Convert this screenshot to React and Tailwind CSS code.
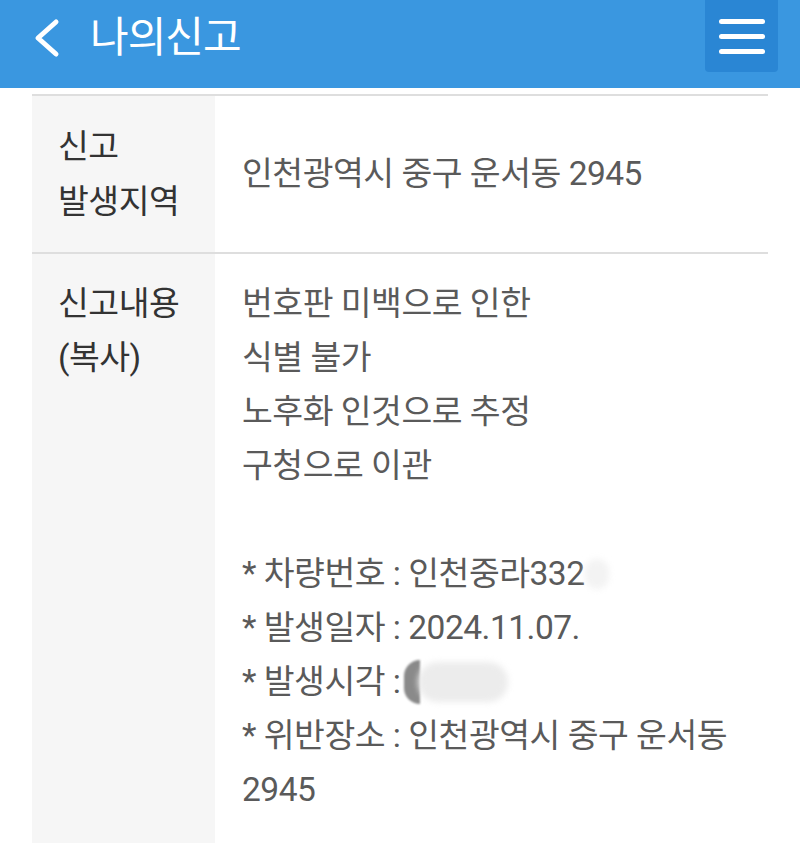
import React from "react";

const font = { fontFamily: '"Roboto", "Noto Sans CJK KR", sans-serif' };

export default function App() {
  return (
    <div className="w-[800px] h-[843px] overflow-hidden bg-white" style={font}>
      <header className="h-[88px] bg-[#3a97e0] flex items-start relative">
        <div className="flex items-center h-[76px] pl-[30px]">
          <svg width="34" height="40" viewBox="0 0 34 40" className="mr-[26px]">
            <path d="M26 4 L8 20 L26 36" fill="none" stroke="white" strokeWidth="5" strokeLinecap="round" strokeLinejoin="round" />
          </svg>
          <span className="text-white text-[42px] leading-none tracking-[-1px]">나의신고</span>
        </div>
        <div className="ml-auto mr-[22px] w-[73px] h-[72px] bg-[#2a86d4] rounded-b-[4px] flex flex-col items-center justify-center gap-[10px]">
          <div className="w-[46px] h-[5px] rounded-full bg-white" />
          <div className="w-[46px] h-[5px] rounded-full bg-white" />
          <div className="w-[46px] h-[5px] rounded-full bg-white" />
        </div>
      </header>
      <div className="mx-[32px] mt-[6px] border-t-2 border-[#dedede]">
        <div className="flex h-[158px] border-b-2 border-[#dedede]">
          <div className="w-[183px] bg-[#f6f6f6] pl-[26px] flex flex-col justify-center text-[33.5px] leading-[55px] text-[#333] tracking-[-0.5px]">
            <span>신고</span>
            <span>발생지역</span>
          </div>
          <div className="flex-1 pl-[27px] flex items-center text-[33.5px] text-[#5a5a5a] tracking-[-0.5px]">
            인천광역시 중구 운서동 2945
          </div>
        </div>
        <div className="flex h-[600px]">
          <div className="w-[183px] bg-[#f6f6f6] pl-[26px] pt-[23px] flex flex-col text-[33.5px] leading-[54px] text-[#333] tracking-[-0.5px]">
            <span>신고내용</span>
            <span>(복사)</span>
          </div>
          <div className="flex-1 pl-[27px] pt-[23px] flex flex-col text-[33.5px] leading-[54px] text-[#5a5a5a] tracking-[-0.5px]">
            <span>번호판 미백으로 인한</span>
            <span>식별 불가</span>
            <span>노후화 인것으로 추정</span>
            <span>구청으로 이관</span>
            <span>&nbsp;</span>
            <span className="flex items-center">* 차량번호 : 인천중라332<span className="inline-block w-[24px] h-[30px] bg-[#f3f3f3] blur-[3px] rounded-full" /></span>
            <span>* 발생일자 : 2024.11.07.</span>
            <span className="flex items-center">
              * 발생시각 :
              <span className="inline-flex items-center ml-[4px]">
                <span className="inline-block w-[16px] h-[44px] bg-[#8a8a8a] rounded-l-full blur-[1px]" />
                <span className="inline-block w-[90px] h-[40px] bg-[#ececec] rounded-full blur-[3px] -ml-[2px]" />
              </span>
            </span>
            <span>* 위반장소 : 인천광역시 중구 운서동</span>
            <span>2945</span>
          </div>
        </div>
      </div>
    </div>
  );
}
